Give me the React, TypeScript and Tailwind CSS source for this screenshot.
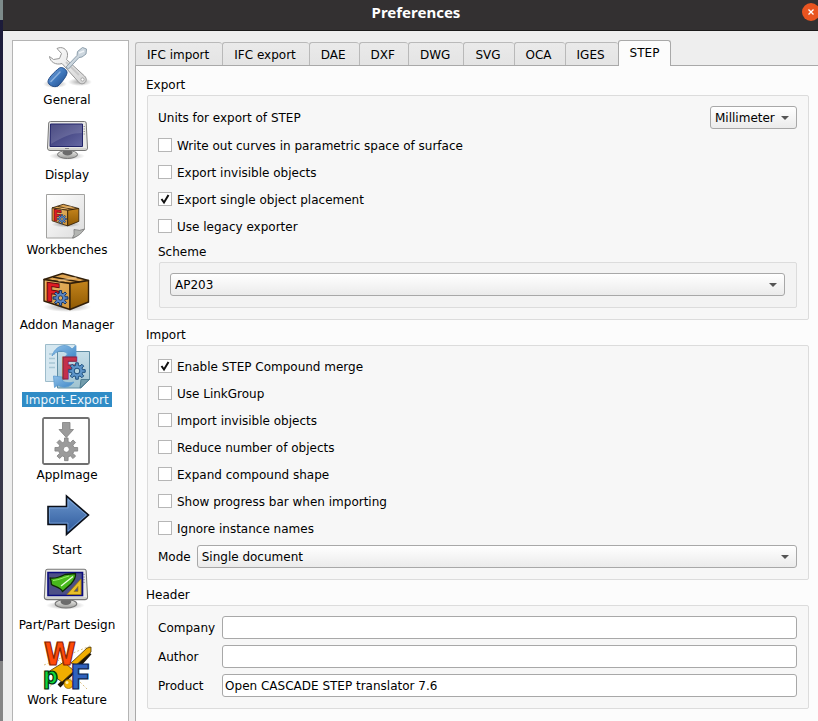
import { useState, type ReactNode } from "react";

function gearPath(cx: number, cy: number, outer: number, inner: number, teeth: number) {
  const points: string[] = [];
  const step = (Math.PI * 2) / teeth;
  for (let i = 0; i < teeth; i++) {
    const a = i * step - Math.PI / 2;
    const spots: [number, number][] = [
      [inner, -0.3],
      [outer, -0.2],
      [outer, 0.2],
      [inner, 0.3],
    ];
    for (const [r, t] of spots) {
      points.push(`${(cx + r * Math.cos(a + t * step)).toFixed(2)} ${(cy + r * Math.sin(a + t * step)).toFixed(2)}`);
    }
  }
  return `M${points.join("L")}Z`;
}

function Icon({ children }: { children: ReactNode }) {
  return (
    <svg viewBox="0 0 48 48" className="block size-12 overflow-visible" aria-hidden="true">
      {children}
    </svg>
  );
}

function GeneralIcon() {
  return (
    <Icon>
      <defs>
        <linearGradient id="steel" x1="0" y1="0" x2="1" y2="1">
          <stop offset="0" stopColor="#ffffff" />
          <stop offset="1" stopColor="#d2d2d2" />
        </linearGradient>
        <linearGradient id="grip" x1="0" y1="0" x2="1" y2="1">
          <stop offset="0" stopColor="#7fa8dc" />
          <stop offset="0.5" stopColor="#3f78bd" />
          <stop offset="1" stopColor="#204a87" />
        </linearGradient>
        <radialGradient id="shade">
          <stop offset="0" stopColor="#000" stopOpacity="0.35" />
          <stop offset="1" stopColor="#000" stopOpacity="0" />
        </radialGradient>
      </defs>
      <ellipse cx="12" cy="41" rx="12" ry="4" fill="url(#shade)" />
      <ellipse cx="37" cy="39" rx="12" ry="4" fill="url(#shade)" />
      <path
        d="M14 5.500C19 3 24 6 24.500 11C24.700 13.500 24 15 23.500 16.500L41.500 33C44 35.500 43.500 38 42 39.500C40 41.500 37 41 35.500 39L19 20.500C13 22.500 7 19 6.500 13.500L10.500 16.500L16.500 15.500L18.500 10.500Z"
        fill="url(#steel)"
        stroke="#969696"
        strokeLinejoin="round"
      />
      <path d="M23 19L36 32" stroke="#c9c9c9" strokeWidth="2" />
      <circle cx="39.500" cy="36.500" r="1.600" fill="#fff" stroke="#999" strokeWidth="0.800" />
      <path
        d="M23 24L34 12.500L34.500 8.500L39.500 4.500L43.500 6L43 11L39 14L36 14.500L25.500 26Z"
        fill="#ccd6de"
        stroke="#8fa0ad"
        strokeLinejoin="round"
      />
      <path d="M36 10L41 8" stroke="#eff4f7" strokeWidth="1.500" />
      <path
        d="M16.500 25C19 23.500 23 26 24 29C24.500 32 20 38 15 43C11 45 5 42 5 38.500C5 35.500 11 29 16.500 25Z"
        fill="url(#grip)"
        stroke="#204a87"
      />
      <path d="M8 38.500L17 29" stroke="#a5c4ea" strokeWidth="1.500" strokeLinecap="round" opacity="0.700" />
    </Icon>
  );
}

function MonitorBody({ children }: { children?: ReactNode }) {
  return (
    <>
      <defs>
        <linearGradient id="screen" x1="0" y1="0" x2="1" y2="1">
          <stop offset="0" stopColor="#2e2f6e" />
          <stop offset="1" stopColor="#6669a3" />
        </linearGradient>
        <linearGradient id="stand" x1="0" y1="0" x2="0" y2="1">
          <stop offset="0" stopColor="#f2f2f0" />
          <stop offset="1" stopColor="#9b9b98" />
        </linearGradient>
      </defs>
      <ellipse cx="24" cy="38" rx="18" ry="4" fill="url(#shade)" />
      <ellipse cx="24.500" cy="36.500" rx="10" ry="4" fill="url(#stand)" stroke="#777" />
      <ellipse cx="24.500" cy="34.500" rx="5" ry="3" fill="#6b6b6b" />
      <path
        d="M7.500 3.500H41.500Q43 3.500 43.200 5L44.500 30Q44.500 32.500 42 32.500H7Q4.500 32.500 4.500 30L5.700 5Q6 3.500 7.500 3.500Z"
        fill="#e9e9e6"
        stroke="#777"
      />
      <path d="M6 31H43" stroke="#bdbdb8" />
      <path d="M40.500 8.500H42M40.500 11H42M40.500 13.500H42M40.500 16H42" stroke="#8a8a86" strokeWidth="0.800" />
      {children}
    </>
  );
}

function DisplayIcon() {
  return (
    <Icon>
      <MonitorBody>
        <path d="M7.500 6H39.500V28.500H7Z" fill="url(#screen)" stroke="#22246a" />
        <path d="M8 6.500H39V15C30 15 21 18 8 26Z" fill="#fff" opacity="0.140" />
        <path d="M22 30.500H26" stroke="#888" />
      </MonitorBody>
    </Icon>
  );
}

function Crate() {
  return (
    <>
      <defs>
        <linearGradient id="front" x1="0" y1="0" x2="1" y2="1">
          <stop offset="0" stopColor="#e9b96e" />
          <stop offset="1" stopColor="#d3963a" />
        </linearGradient>
        <linearGradient id="side" x1="0" y1="0" x2="0" y2="1">
          <stop offset="0" stopColor="#c4841c" />
          <stop offset="1" stopColor="#8f5902" />
        </linearGradient>
      </defs>
      <ellipse cx="24" cy="39" rx="24" ry="5" fill="url(#shade)" />
      <g stroke="#33200a" strokeWidth="1.400" strokeLinejoin="round">
        <path d="M1 11.500L19.500 5.500L45.500 12.500L27 15.500Z" fill="#dfa552" />
        <path d="M1 11.500L27 15.500V41.500L1 33Z" fill="url(#front)" />
        <path d="M27 15.500L45.500 12.500V34L27 41.500Z" fill="url(#side)" />
        <path d="M10 9L36.500 14" fill="none" />
      </g>
      <path d="M15.500 13L33.500 9.500" stroke="#f4d09a" strokeWidth="2" opacity="0.500" />
      <g transform="translate(4 33) skewY(9)">
        <text
          x="-2"
          y="0"
          className="font-['DejaVu_Sans_Condensed','DejaVu_Sans'] text-[26px] font-bold"
          fill="#e01b24"
          stroke="#6e0a0e"
          strokeWidth="1"
        >
          F
        </text>
      </g>
      <path d={gearPath(17.5, 30, 7.5, 5, 8)} fill="#5a86c4" stroke="#12305e" strokeWidth="1" />
      <circle cx="17.500" cy="30" r="2.200" fill="#e0aa5c" stroke="#12305e" strokeWidth="0.800" />
    </>
  );
}

function AddonIcon() {
  return (
    <Icon>
      <Crate />
    </Icon>
  );
}

function WorkbenchIcon() {
  return (
    <Icon>
      <defs>
        <linearGradient id="paper" x1="0" y1="0" x2="1" y2="1">
          <stop offset="0" stopColor="#ffffff" />
          <stop offset="1" stopColor="#dcdcdc" />
        </linearGradient>
      </defs>
      <path d="M3.500 1.500H41.500V36L31 45H3.500Z" fill="url(#paper)" stroke="#a2a2a0" />
      <path d="M41.500 36Q37 38.500 31 36.500Q32 42 29.500 45Q37 43 41.500 36Z" fill="#b4b6b3" stroke="#777" strokeWidth="0.800" />
      <g transform="translate(8.500 8) scale(0.600)">
        <Crate />
      </g>
    </Icon>
  );
}

function ImportExportIcon() {
  return (
    <Icon>
      <defs>
        <linearGradient id="swap" x1="0" y1="0" x2="1" y2="1">
          <stop offset="0" stopColor="#8fc0e8" />
          <stop offset="1" stopColor="#3f87c6" />
        </linearGradient>
        <linearGradient id="tinted" x1="0" y1="0" x2="0" y2="1">
          <stop offset="0" stopColor="#c6dfe9" />
          <stop offset="1" stopColor="#a0c3d0" />
        </linearGradient>
      </defs>
      <path d="M2.500 1.500H32V38.500H2.500Z" fill="#d5e7f0" stroke="#9dbccb" />
      <path d="M6 11H12M6 15.500H12M6 20H12M6 24.500H12" stroke="#a7c6d4" strokeWidth="1.500" />
      <path d="M14.500 8.500H46.500V36.500L38 45H14.500Z" fill="url(#tinted)" stroke="#5f8da3" />
      <path d="M46.500 36.500H38L37 45Z" fill="#739dad" stroke="#4e7c90" />
      <path
        d="M9 13C12 3 23 -1 29 6L33 2.500V15.500H20.500L24.500 11C20 6 13 8 9 13Z"
        fill="url(#swap)"
        stroke="#5c9bd0"
        strokeWidth="0.800"
      />
      <path
        d="M31 39C26 45.500 19 45 15 42L11.500 44.500L10.500 33L23 34.500L19 38C23 40 27 40 31 39Z"
        fill="url(#swap)"
        stroke="#5c9bd0"
        strokeWidth="0.800"
      />
      <text
        x="17.500"
        y="36"
        className="font-['DejaVu_Sans_Condensed','DejaVu_Sans'] text-[30px] font-bold"
        fill="#c5304a"
        stroke="#8a2444"
        strokeWidth="1"
      >
        F
      </text>
      <path d={gearPath(34, 28, 8.3, 5.8, 8)} fill="#5d95c9" stroke="#1c4e7c" />
      <circle cx="34" cy="28" r="2.800" fill="#b4d3df" stroke="#1c4e7c" />
    </Icon>
  );
}

function AppImageIcon() {
  return (
    <Icon>
      <rect x="0" y="0" width="46" height="46" rx="1.500" fill="#fff" stroke="#707070" strokeWidth="1.800" />
      <path d="M19.500 4.500H27V11.500H30.500L23.300 19.500L16 11.500H19.500Z" fill="#9b9b9b" stroke="#808080" strokeWidth="0.800" />
      <path d={gearPath(23.3, 31.3, 11.5, 7.8, 8)} fill="#9b9b9b" stroke="#808080" strokeWidth="0.800" />
      <circle cx="23.300" cy="31.300" r="3" fill="#fff" stroke="#808080" strokeWidth="0.800" />
    </Icon>
  );
}

function StartIcon() {
  return (
    <Icon>
      <defs>
        <linearGradient id="arrow" x1="0" y1="0" x2="0" y2="1">
          <stop offset="0" stopColor="#6d98ce" />
          <stop offset="1" stopColor="#2b579a" />
        </linearGradient>
      </defs>
      <path
        d="M5 13.500H23.500V3L45.500 22L23.500 41.500V31.500H5Z"
        fill="url(#arrow)"
        stroke="#0b0f18"
        strokeWidth="1.600"
      />
      <path d="M6.500 15H25V6.500L43.300 22L25 38V30H6.500Z" fill="none" stroke="#8fb6e3" strokeWidth="0.700" opacity="0.800" />
    </Icon>
  );
}

function PartDesignIcon() {
  return (
    <Icon>
      <g transform="translate(-3.500 -2.500) scale(1.080 1.050)">
        <MonitorBody />
      </g>
      <path d="M5 4.500H39.500V27.500H5Z" fill="#4d4f86" stroke="#0b0c7e" strokeWidth="1.600" />
      <path
        d="M7 10C13 11 19 8 22 6.500L32.500 5.500C33 9 31 12.500 28 16L19.500 23.500C18 19.500 11 18.500 8.500 16.500C8 14.500 8.500 12.500 7 10Z"
        fill="#48b81c"
        stroke="#0d2b05"
        strokeWidth="1.300"
        strokeLinejoin="round"
      />
      <path d="M18 18L30 8.500" stroke="#ecffe0" strokeWidth="1.300" />
      <path d="M10 12.500C16 12 20 9.500 26 8" stroke="#9bf06a" fill="none" />
      <path d="M24 26.500L38 11V26.500Z M31 23.500H35V18.500Z" fill="#e8bf2a" fillRule="evenodd" stroke="#a37d00" strokeWidth="0.700" />
    </Icon>
  );
}

function WorkFeatureIcon() {
  return (
    <Icon>
      <path d="M1 22L47 3M4 46L46 10M6 8L44 46M20 0L30 46" stroke="#c9a24a" strokeWidth="0.700" strokeDasharray="2 2" />
      <path d="M16 43L31 28L47 10" fill="none" stroke="#1d1608" strokeWidth="4" />
      <g fill="#f0ad00" stroke="#4d3500" strokeWidth="0.800">
        <path d="M5 29L21 19L31 28L19 39Z" />
        <path d="M28 20L44 5L48 4V9L33 22Z" />
      </g>
      <circle cx="25.500" cy="41" r="4.500" fill="#f5b400" stroke="#8a5b00" strokeWidth="0.700" />
      <circle cx="24" cy="39.500" r="1.500" fill="#fff0b0" />
      <g strokeWidth="1.200" className="font-['DejaVu_Sans_Condensed','DejaVu_Sans'] font-bold">
        <text x="1" y="21.500" className="text-[32px]" fill="#ff4a0a" stroke="#8a2400">
          W
        </text>
        <text x="0" y="41" className="text-[23px]" fill="#0fd83c" stroke="#022f0b">
          p
        </text>
        <text x="27" y="46" className="text-[34px]" fill="#2f62bf" stroke="#0a1f50">
          F
        </text>
      </g>
    </Icon>
  );
}

const pages: [string, () => ReactNode][] = [
  ["General", GeneralIcon],
  ["Display", DisplayIcon],
  ["Workbenches", WorkbenchIcon],
  ["Addon Manager", AddonIcon],
  ["Import-Export", ImportExportIcon],
  ["AppImage", AppImageIcon],
  ["Start", StartIcon],
  ["Part/Part Design", PartDesignIcon],
  ["Work Feature", WorkFeatureIcon],
];

const tabs = ["IFC import", "IFC export", "DAE", "DXF", "DWG", "SVG", "OCA", "IGES", "STEP"];

function Check({ label, checked = false }: { label: string; checked?: boolean }) {
  return (
    <label className="flex h-[21px] items-center gap-[5px] self-start pb-px">
      <span className="relative block size-3.5">
        <input
          type="checkbox"
          defaultChecked={checked}
          className="peer block size-3.5 appearance-none border border-[#b6b6b6] bg-white"
        />
        <svg
          viewBox="0 0 14 14"
          className="pointer-events-none absolute inset-0 hidden size-3.5 peer-checked:block"
          aria-hidden="true"
        >
          <path d="M3.500 7L6 10.500L10.500 3" fill="none" stroke="#111" strokeWidth="2" />
        </svg>
      </span>
      <span className="pt-0.5 leading-4">{label}</span>
    </label>
  );
}

function Select({ id, label, options, className = "" }: { id: string; label?: string; options: string[]; className?: string }) {
  return (
    <div className={`relative ${className}`}>
      <select
        id={id}
        aria-label={label}
        className="block h-[23px] w-full appearance-none rounded-[3px] border border-[#a8a8a8] bg-linear-to-b from-white to-[#ebebeb] pt-0.5 pr-5 pl-1 leading-[17px] outline-none"
      >
        {options.map((o) => (
          <option key={o}>{o}</option>
        ))}
      </select>
      <svg
        viewBox="0 0 8 4"
        className="pointer-events-none absolute top-[10px] right-2 h-1 w-2"
        aria-hidden="true"
      >
        <path d="M0 0H8L4 4Z" fill="#555" />
      </svg>
    </div>
  );
}

function Group({ title, nested = false, children }: { title: string; nested?: boolean; children: ReactNode }) {
  return (
    <section>
      <h2 className="leading-[19px]">{title}</h2>
      <div
        className={`ml-px flex flex-col gap-1.5 rounded-[2px] border border-[#dcdcdc] pt-[10px] pr-[11px] pb-[11px] pl-[10px] ${
          nested ? "bg-[#f3f3f3]" : "bg-[#f7f7f7]"
        }`}
      >
        {children}
      </div>
    </section>
  );
}

function Field({ id, label, value = "" }: { id: string; label: string; value?: string }) {
  return (
    <>
      <label htmlFor={id} className="pt-px leading-4">
        {label}
      </label>
      <input
        id={id}
        type="text"
        defaultValue={value}
        className="h-[23px] w-full min-w-0 rounded-[3px] border border-[#a8a8a8] bg-white px-0.5 outline-none"
      />
    </>
  );
}

export default function App() {
  const [page, setPage] = useState("Import-Export");
  const [tab, setTab] = useState("STEP");
  return (
    <div className="flex min-h-screen overflow-hidden bg-[#eeeeee] font-['DejaVu_Sans',sans-serif] text-[12px] leading-[15px] text-black">
      <div className="flex w-[3px] shrink-0 flex-col">
        <div className="h-5 bg-[#7d8a8a]" />
        <div className="flex-1 bg-linear-to-b from-[#1c1b3a] to-[#44434f]" />
        <div className="h-[60px] bg-[#858585]" />
      </div>
      <div className="flex min-w-0 flex-1 flex-col">
        <header className="relative flex h-[31px] items-center justify-center border-b border-[#1b1a1a] bg-[#333031] pb-1.5 pl-[11px]">
          <h1 className="font-['Noto_Sans','Open_Sans',sans-serif] text-[15px] leading-5 font-bold text-white">
            Preferences
          </h1>
          <button
            type="button"
            aria-label="Close"
            className="absolute top-[3px] -right-0.5 flex size-[18px] items-center justify-center rounded-full bg-[#e95420]"
          >
            <svg viewBox="0 0 8 8" className="size-2" aria-hidden="true">
              <path d="M1.500 1.500L6.500 6.500M6.500 1.500L1.500 6.500" stroke="#fff" strokeWidth="1.300" />
            </svg>
          </button>
        </header>
        <main className="flex flex-1 gap-1.5 pt-[9px] pl-[9px]">
          <nav className="flex w-[117px] shrink-0 flex-col border border-b-0 border-[#b4b4b4] bg-white pr-[7px]">
            {pages.map(([name, Drawing]) => (
              <button
                key={name}
                type="button"
                onClick={() => setPage(name)}
                className="flex h-[75px] flex-col items-center gap-px pt-0.5 whitespace-nowrap"
              >
                <Drawing />
                <span
                  className={
                    page === name
                      ? "h-[15px] bg-[#308cc6] px-[3px] leading-[17px] text-[#eef6fb]"
                      : "h-[15px] px-[3px] leading-[17px]"
                  }
                >
                  {name}
                </span>
              </button>
            ))}
          </nav>
          <div className="flex min-w-0 flex-1 flex-col">
            <div role="tablist" className="flex h-[26px] items-end border-b border-[#a9a9a9]">
              {tabs.map((name) => (
                <button
                  key={name}
                  type="button"
                  role="tab"
                  aria-selected={tab === name}
                  onClick={() => setTab(name)}
                  className={
                    tab === name
                      ? "-mb-px h-[26px] rounded-t-[3px] border border-b-0 border-[#a9a9a9] bg-[#fcfcfc] px-[11px]"
                      : "h-[23px] rounded-t-[3px] border-t border-l border-[#b9b9b9] bg-linear-to-b from-[#eaeaea] to-[#e4e4e4] pt-0.5 pr-[13px] pl-[11px]"
                  }
                >
                  {name}
                </button>
              ))}
            </div>
            <div className="flex flex-1 flex-col gap-1.5 border-l border-[#a9a9a9] bg-[#fcfcfc] pt-[10px] pr-[9px] pl-[10px]">
              <Group title="Export">
                <div className="flex items-center justify-between">
                  <label htmlFor="units" className="pt-px leading-4">
                    Units for export of STEP
                  </label>
                  <Select id="units" options={["Millimeter", "Meter", "Inch"]} className="w-[87px]" />
                </div>
                <Check label="Write out curves in parametric space of surface" />
                <Check label="Export invisible objects" />
                <Check label="Export single object placement" checked />
                <Check label="Use legacy exporter" />
                <Group title="Scheme" nested>
                  <Select id="scheme" label="Scheme" options={["AP203", "AP214"]} />
                </Group>
              </Group>
              <Group title="Import">
                <Check label="Enable STEP Compound merge" checked />
                <Check label="Use LinkGroup" />
                <Check label="Import invisible objects" />
                <Check label="Reduce number of objects" />
                <Check label="Expand compound shape" />
                <Check label="Show progress bar when importing" />
                <Check label="Ignore instance names" />
                <div className="flex items-center gap-1.5">
                  <label htmlFor="mode" className="pt-px leading-4">
                    Mode
                  </label>
                  <Select id="mode" options={["Single document", "Multiple documents"]} className="flex-1" />
                </div>
              </Group>
              <Group title="Header">
                <div className="grid grid-cols-[auto_1fr] items-center gap-x-[7px] gap-y-1.5">
                  <Field id="company" label="Company" />
                  <Field id="author" label="Author" />
                  <Field id="product" label="Product" value="Open CASCADE STEP translator 7.6" />
                </div>
              </Group>
            </div>
          </div>
        </main>
      </div>
    </div>
  );
}
